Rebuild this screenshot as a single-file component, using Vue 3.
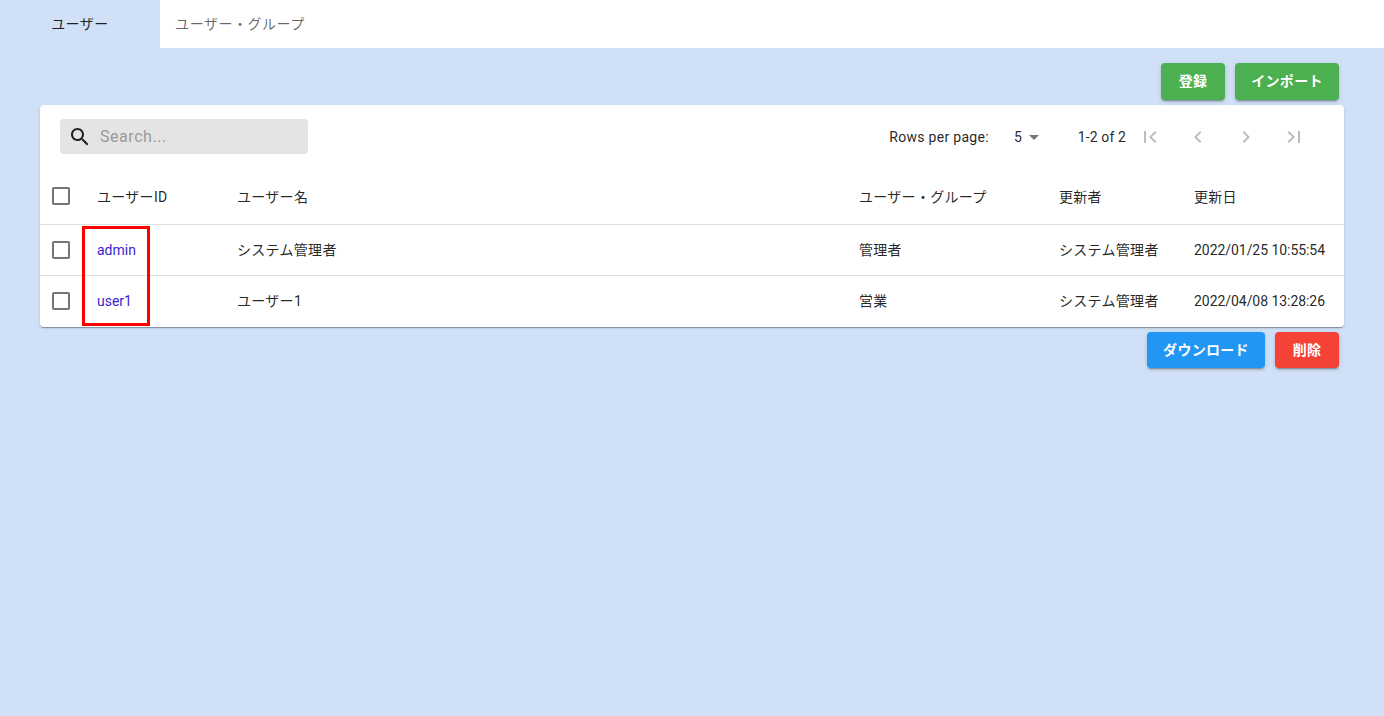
<script setup>
const rows = [
  { id: 'admin', name: 'システム管理者', group: '管理者', by: 'システム管理者', date: '2022/01/25 10:55:54' },
  { id: 'user1', name: 'ユーザー1', group: '営業', by: 'システム管理者', date: '2022/04/08 13:28:26' },
]
</script>

<template>
  <div class="page">
    <div class="tabs">
      <div class="tab active">ユーザー</div>
      <div class="tab">ユーザー・グループ</div>
    </div>
    <div class="actions top">
      <button class="btn green reg">登録</button>
      <button class="btn green imp">インポート</button>
    </div>
    <div class="card">
      <div class="toolbar">
        <div class="search">
          <svg class="search-icon" viewBox="0 0 24 24" width="24" height="24"><path fill="#212121" d="M15.5 14h-.79l-.28-.27C15.41 12.59 16 11.11 16 9.5 16 5.91 13.09 3 9.5 3S3 5.91 3 9.5 5.91 16 9.5 16c1.61 0 3.09-.59 4.23-1.57l.27.28v.79l5 4.99L20.49 19l-4.99-5zm-6 0C7.01 14 5 11.99 5 9.5S7.01 5 9.5 5 14 7.01 14 9.5 11.99 14 9.5 14z"/></svg>
          <span class="placeholder">Search...</span>
        </div>
        <div class="pager">
          <span class="rpp">Rows per page:</span>
          <span class="size">5</span>
          <svg class="caret" viewBox="0 0 24 24" width="24" height="24"><path fill="#757575" d="M7 10l5 5 5-5z"/></svg>
          <span class="range">1-2 of 2</span>
          <div class="nav">
            <svg viewBox="0 0 24 24" width="24" height="24"><path fill="#bdbdbd" d="M18.41 16.59L13.82 12l4.59-4.59L17 6l-6 6 6 6zM6 6h2v12H6z"/></svg>
            <svg viewBox="0 0 24 24" width="24" height="24"><path fill="#bdbdbd" d="M15.41 7.41L14 6l-6 6 6 6 1.41-1.41L10.83 12z"/></svg>
            <svg viewBox="0 0 24 24" width="24" height="24"><path fill="#bdbdbd" d="M10 6L8.59 7.41 13.17 12l-4.58 4.59L10 18l6-6z"/></svg>
            <svg viewBox="0 0 24 24" width="24" height="24"><path fill="#bdbdbd" d="M5.59 7.41L10.18 12l-4.59 4.59L7 18l6-6-6-6zM16 6h2v12h-2z"/></svg>
          </div>
        </div>
      </div>
      <div class="row head">
        <div class="cell check"><span class="box"></span></div>
        <div class="cell jp">ユーザーID</div>
        <div class="cell jp">ユーザー名</div>
        <div class="cell jp">ユーザー・グループ</div>
        <div class="cell jp">更新者</div>
        <div class="cell jp">更新日</div>
      </div>
      <div v-for="r in rows" :key="r.id" class="row body">
        <div class="cell check"><span class="box"></span></div>
        <div class="cell link">{{ r.id }}</div>
        <div class="cell jp">{{ r.name }}</div>
        <div class="cell jp">{{ r.group }}</div>
        <div class="cell jp">{{ r.by }}</div>
        <div class="cell date">{{ r.date }}</div>
      </div>
      <div class="highlight"></div>
    </div>
    <div class="actions bottom">
      <button class="btn blue">ダウンロード</button>
      <button class="btn red reg">削除</button>
    </div>
  </div>
</template>

<style scoped>
.page {
  min-height: 716px;
  background: #d0e1f7;
  font-family: Roboto, "Noto Sans CJK JP", sans-serif;
  font-size: 14px;
  color: rgba(0, 0, 0, 0.87);
  overflow: hidden;
}
.tabs {
  display: flex;
  height: 48px;
  background: #fff;
}
.tab {
  width: 160px;
  display: flex;
  align-items: center;
  justify-content: center;
  padding-bottom: 2px;
  box-sizing: border-box;
  letter-spacing: 0.5px;
  color: rgba(0, 0, 0, 0.6);
}
.tab.active {
  background: #d0e1f7;
  color: rgba(0, 0, 0, 0.87);
}
.actions {
  display: flex;
  justify-content: flex-end;
  gap: 10px;
  padding-right: 45px;
}
.actions.top {
  margin-top: 15px;
}
.actions.bottom {
  margin-top: 5px;
}
.btn {
  border: 0;
  border-radius: 4px;
  color: #fff;
  font: 700 14px Roboto, "Noto Sans CJK JP", sans-serif;
  letter-spacing: 0.3px;
  padding: 0 0 3px;
  box-shadow: 0 3px 1px -2px rgba(0,0,0,.2), 0 2px 2px 0 rgba(0,0,0,.14), 0 1px 5px 0 rgba(0,0,0,.12);
}
.top .btn { height: 37px; }
.bottom .btn { height: 36px; padding-bottom: 2px; }
.reg { width: 64px; }
.imp { width: 104px; }
.blue { width: 118px; background: #2196f3; }
.green { background: #4caf50; }
.red { background: #f44336; }
.card {
  position: relative;
  margin: 5px 40px 0;
  height: 222px;
  background: #fff;
  border-radius: 4px;
  box-shadow: 0 2px 1px -1px rgba(0,0,0,.2), 0 1px 1px 0 rgba(0,0,0,.14), 0 1px 3px 0 rgba(0,0,0,.12);
}
.toolbar {
  display: flex;
  justify-content: space-between;
  align-items: center;
  height: 35px;
  padding: 14px 38px 0 20px;
}
.search {
  width: 248px;
  height: 35px;
  display: flex;
  align-items: center;
  background: #e4e4e4;
  border-radius: 4px;
  padding-left: 8px;
  box-sizing: border-box;
}
.placeholder {
  margin-left: 8px;
  font-size: 16px;
  letter-spacing: 0.55px;
  color: #9a9a9a;
}
.pager {
  display: flex;
  align-items: center;
}
.rpp { margin-right: 25px; letter-spacing: 0.3px; }
.range { margin-left: 32px; margin-right: 12px; letter-spacing: 0.12px; }
.nav {
  display: flex;
  gap: 24px;
}
.row {
  display: grid;
  grid-template-columns: 57px 140px 622px 200px 135px 1fr;
  align-items: center;
  border-bottom: 1px solid #e0e0e0;
  box-sizing: border-box;
  line-height: 20px;
}
.row.head { height: 71px; padding-top: 14px; }
.row.head .jp { padding-top: 2px; }
.row.body { height: 51px; }
.row.body + .row.body { border-bottom-color: transparent; }
.jp { letter-spacing: 0.3px; }
.date { letter-spacing: -0.05px; }
.check { display: flex; padding-left: 12px; }
.box {
  width: 14px;
  height: 14px;
  border: 2px solid #757575;
  border-radius: 2px;
}
.link { color: #3a1fd0; }
.highlight {
  position: absolute;
  left: 42px;
  top: 121px;
  width: 62px;
  height: 94px;
  border: 3px solid #ff0000;
}
</style>
